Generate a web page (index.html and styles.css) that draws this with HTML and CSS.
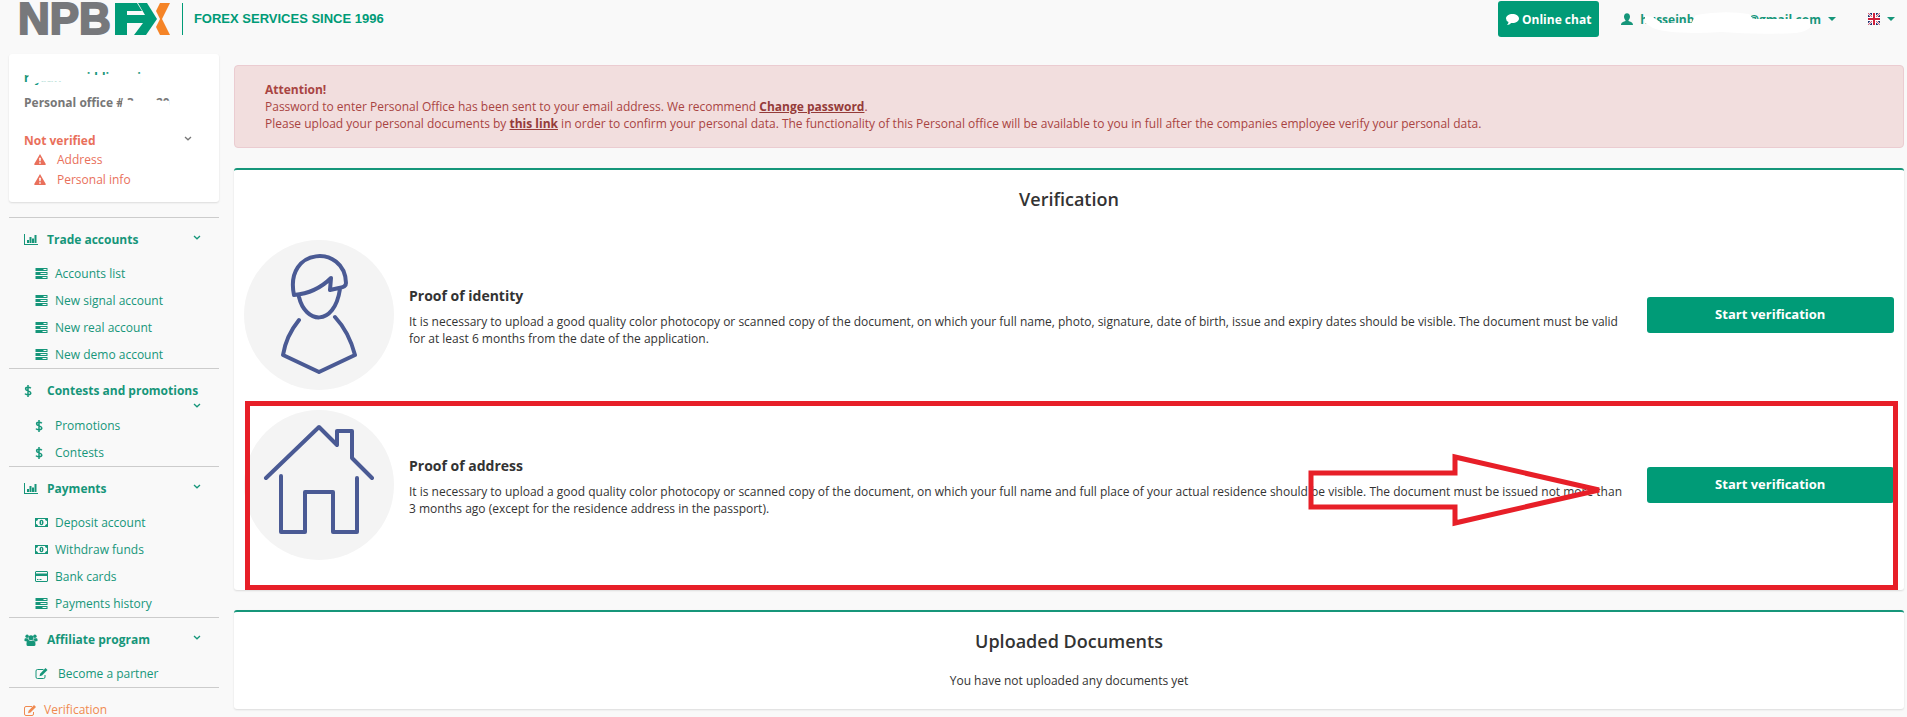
FILE: index.html
```html
<!DOCTYPE html>
<html lang="en">
<head>
    <meta charset="UTF-8">
    <meta name="viewport" content="width=device-width, initial-scale=1.0">
    <title>NPBFX - Verification</title>
    <link rel="stylesheet" href="styles.css">
</head>
<body>

<!-- icon set -->
<svg class="sprite" aria-hidden="true">
    <symbol id="i-chart" viewBox="0 0 14 12"><path d="M0 0h1v10h13v1H0zM3 6h2v3H3zM5.500 3h2v6h-2zM8 4.500h2V9H8zM10.500 1H12.500v8h-2z"/></symbol>
    <symbol id="i-tasks" viewBox="0 0 12 11"><path fill-rule="evenodd" d="M0 0h12v3H0zM8 1v1h3V1zM0 4h12v3H0zM5 5v1h6V5zM0 8h12v3H0zM7 9v1h4V9z"/></symbol>
    <symbol id="i-dollar" viewBox="0 0 8 12"><path fill="none" stroke="currentColor" stroke-width="1.500" d="M4 0v12M6.800 3.300C6 2.200 1.600 1.700 1.600 3.900 1.600 6.200 6.800 5.500 6.800 8 6.800 10.300 2 10.200 1 8.700"/></symbol>
    <symbol id="i-money" viewBox="0 0 13 9"><path fill-rule="evenodd" d="M0 0h13v9H0zM3 1C3 2 2 3 1 3v3c1 0 2 1 2 2h7c0-1 1-2 2-2V3c-1 0-2-1-2-2z"/><path fill-rule="evenodd" d="M6.500 1.700c2.700 0 2.700 5.600 0 5.600s-2.700-5.600 0-5.600zM6.200 3v3h.8V3z"/></symbol>
    <symbol id="i-card" viewBox="0 0 13 11"><path fill-rule="evenodd" d="M1 0h11l1 1v9l-1 1H1l-1-1V1zM1 1v1.500h11V1zM1 5v5h11V5zM2 8h1.500v1H2zM4.500 8h2v1h-2z"/></symbol>
    <symbol id="i-users" viewBox="0 0 13 12"><circle cx="2.600" cy="2.200" r="1.700"/><circle cx="10.400" cy="2.200" r="1.700"/><circle cx="6.500" cy="3.800" r="2.500"/><path d="M0 7V5.500C0 4 1 4 3.500 4.500L4.500 6.500 2.500 7.500zM13 7V5.500C13 4 12 4 9.500 4.500L8.500 6.500l2 1zM2 10.500C2 7 3 6.300 4.500 6.300q2 1.300 4 0C10 6.300 11 7 11 10.500q0 1.500-1.500 1.500h-6Q2 12 2 10.500z"/></symbol>
    <symbol id="i-edit" viewBox="0 0 12 11"><path fill="none" stroke="currentColor" d="M8 1.500H2Q.5 1.500.5 3v6q0 1.500 1.500 1.500h6q1.500 0 1.500-1.500V7"/><path d="M10 0l2 2-5.500 5.500-2.500.8.600-2.600z"/></symbol>
    <symbol id="i-warn" viewBox="0 0 13 12"><path fill-rule="evenodd" d="M6.500 0l6.300 11q.2 1-.8 1H1Q0 12 .2 11zM5.500 4l.3 4h1.400l.3-4zM5.700 9v1.500h1.600V9z"/></symbol>
    <symbol id="i-down" viewBox="0 0 8 5"><path fill="none" stroke="currentColor" stroke-width="1.300" d="M1 1l3 2.800L7 1"/></symbol>
    <symbol id="i-caret" viewBox="0 0 8 4"><path d="M0 0h8L4 4z"/></symbol>
    <symbol id="i-user" viewBox="0 0 12 12"><path d="M3 3.500C3-1 9-1 9 3.500 9 5.500 8.200 6.500 7.500 7.200v.8c1.500.7 4.500 1 4.500 4H0c0-3 3-3.300 4.500-4v-.8C3.800 6.500 3 5.500 3 3.500z"/></symbol>
    <symbol id="i-chat" viewBox="0 0 13 11"><path d="M6.500 0C10 0 13 1.800 13 4.500S10 9 6.500 9H5.200Q3.500 10.800 1 11 2.500 9.700 2.500 8 0 6.800 0 4.500C0 1.800 3 0 6.500 0z"/></symbol>
</svg>

<header class="header">
    <a class="logo" href="#" aria-label="NPBFX">
        <span class="logo-text">NPB</span>
        <svg class="logo-mark" width="55" height="32" viewBox="0 0 55 32">
            <path fill="#009b77" d="M0 0h22l5 8H12v4h18L23 0h9l10 16-11 16H19l9-12H12v12H0z"/>
            <path fill="#f58427" d="M45 0h10l-8 16 8 16H45l-4-8 4-8-4-8z"/>
        </svg>
    </a>
    <span class="slogan">FOREX SERVICES SINCE 1996</span>
    <div class="header-right">
        <button class="btn chat"><svg width="13" height="11"><use href="#i-chat"/></svg>Online chat</button>
        <button class="menu user">
            <svg width="12" height="12"><use href="#i-user"/></svg>
            <span class="masked">husseinb<span class="mask-gap"></span>@gmail.com
                <svg class="mask" viewBox="0 0 182 24" preserveAspectRatio="none"><path fill="#fff" d="M5 12V5l8 1 8 6h31l4-8q28-5 54-1l4 5h57l1 8q-5 5-15 6-40 2-75-1-50 3-69-4z"/></svg>
            </span>
            <svg width="8" height="4"><use href="#i-caret"/></svg>
        </button>
        <button class="menu lang" aria-label="Language">
            <svg width="12" height="12" viewBox="0 0 12 12">
                <path fill="#223370" d="M0 0h12v12H0z"/>
                <path stroke="#fff" stroke-width="2" d="M0 0l12 12M12 0L0 12"/>
                <path stroke="#d0203c" stroke-width=".7" d="M0 0l12 12M12 0L0 12"/>
                <path stroke="#fff" stroke-width="4" d="M6 0v12M0 6h12"/>
                <path stroke="#d0203c" stroke-width="2" d="M6 0v12M0 6h12"/>
            </svg>
            <svg width="8" height="4"><use href="#i-caret"/></svg>
        </button>
    </div>
</header>

<div class="layout">
    <aside class="sidebar">
        <div class="profile">
            <a class="name masked" href="#">r&nbsp; jaan &nbsp; &nbsp; &nbsp; &nbsp;iddi &nbsp; &nbsp; &nbsp; &nbsp; i
                <svg class="mask" viewBox="0 0 130 20" preserveAspectRatio="none"><path fill="#fff" d="M5 0h50v7h75v13H43l-1-5H20L5 20zM5 6h50v6H14l-2 5H5z"/></svg>
            </a>
            <div class="office masked">Personal office # 3 <span class="digits-gap"></span>20
                <svg class="mask" viewBox="0 0 150 20" preserveAspectRatio="none"><path fill="#fff" d="M101 8h49v12h-49z"/></svg>
            </div>
            <div class="status">
                <span>Not verified</span>
                <svg width="8" height="5"><use href="#i-down"/></svg>
            </div>
            <ul class="checks">
                <li><svg width="12" height="11"><use href="#i-warn"/></svg><a href="#">Address</a></li>
                <li><svg width="12" height="11"><use href="#i-warn"/></svg><a href="#">Personal info</a></li>
            </ul>
        </div>

        <nav>
            <section class="group">
                <a class="group-title" href="#"><svg class="icon" width="14" height="12"><use href="#i-chart"/></svg><span>Trade accounts</span><svg class="chevron" width="8" height="13"><use href="#i-down"/></svg></a>
                <a class="item" href="#"><svg class="icon" width="12" height="11"><use href="#i-tasks"/></svg>Accounts list</a>
                <a class="item" href="#"><svg class="icon" width="12" height="11"><use href="#i-tasks"/></svg>New signal account</a>
                <a class="item" href="#"><svg class="icon" width="12" height="11"><use href="#i-tasks"/></svg>New real account</a>
                <a class="item" href="#"><svg class="icon" width="12" height="11"><use href="#i-tasks"/></svg>New demo account</a>
            </section>
            <section class="group">
                <a class="group-title" href="#"><svg class="icon dollar" width="8" height="12"><use href="#i-dollar"/></svg><span>Contests and promotions</span><svg class="chevron" width="8" height="13"><use href="#i-down"/></svg></a>
                <a class="item" href="#"><svg class="icon dollar" width="8" height="12"><use href="#i-dollar"/></svg>Promotions</a>
                <a class="item" href="#"><svg class="icon dollar" width="8" height="12"><use href="#i-dollar"/></svg>Contests</a>
            </section>
            <section class="group">
                <a class="group-title" href="#"><svg class="icon" width="14" height="12"><use href="#i-chart"/></svg><span>Payments</span><svg class="chevron" width="8" height="13"><use href="#i-down"/></svg></a>
                <a class="item" href="#"><svg class="icon" width="13" height="9"><use href="#i-money"/></svg>Deposit account</a>
                <a class="item" href="#"><svg class="icon" width="13" height="9"><use href="#i-money"/></svg>Withdraw funds</a>
                <a class="item" href="#"><svg class="icon" width="13" height="11"><use href="#i-card"/></svg>Bank cards</a>
                <a class="item" href="#"><svg class="icon" width="12" height="11"><use href="#i-tasks"/></svg>Payments history</a>
            </section>
            <section class="group">
                <a class="group-title" href="#"><svg class="icon" width="14" height="12"><use href="#i-users"/></svg><span>Affiliate program</span><svg class="chevron" width="8" height="13"><use href="#i-down"/></svg></a>
                <a class="item wide" href="#"><svg class="icon" width="12" height="11"><use href="#i-edit"/></svg>Become a partner</a>
            </section>
            <section class="group">
                <a class="single" href="#"><svg width="12" height="11"><use href="#i-edit"/></svg>Verification</a>
            </section>
        </nav>
    </aside>

    <main class="main">
        <div class="alert">
            <strong>Attention!</strong><br>
            Password to enter Personal Office has been sent to your email address. We recommend <a href="#">Change password</a>.<br>
            Please upload your personal documents by <a href="#">this link</a> in order to confirm your personal data. The functionality of this Personal office will be available to you in full after the companies employee verify your personal data.
        </div>

        <section class="panel verification">
            <h2>Verification</h2>
            <div class="proof">
                <svg class="picture" viewBox="0 0 150 150">
                    <circle cx="75" cy="75" r="75" fill="#f4f4f4"/>
                    <path d="M50 55C40 7 101 4 102 43Q102 47 95 48L86 50 87 38Q72 53 50 55M55 57C61 83 90 88 96 49M55 80Q42 96 39 115L75 132 111 115Q105 92 91 77"/>
                </svg>
                <div class="info">
                    <h3>Proof of identity</h3>
                    <p>It is necessary to upload a good quality color photocopy or scanned copy of the document, on which your full name, photo, signature, date of birth, issue and expiry dates should be visible. The document must be valid for at least 6 months from the date of the application.</p>
                </div>
                <button class="btn start">Start verification</button>
            </div>
            <div class="proof">
                <svg class="picture" viewBox="0 0 150 150">
                    <circle cx="75" cy="75" r="75" fill="#f4f4f4"/>
                    <path d="M22 68L75 17 93 35V21h15v27l20 20M37 66v56h24V82h28v40h24V68"/>
                </svg>
                <div class="info">
                    <h3>Proof of address</h3>
                    <p>It is necessary to upload a good quality color photocopy or scanned copy of the document, on which your full name and full place of your actual residence should be visible. The document must be issued not more than 3 months ago (except for the residence address in the passport).</p>
                </div>
                <button class="btn start">Start verification</button>
                <div class="highlight"></div>
                <svg class="arrow" width="298" height="74" viewBox="0 0 298 74"><path d="M4 20h144V4l144 33-144 33V54H4z"/></svg>
            </div>
        </section>

        <section class="panel">
            <h2>Uploaded Documents</h2>
            <p class="empty">You have not uploaded any documents yet</p>
        </section>
    </main>
</div>

</body>
</html>
```

FILE: styles.css
```css
* {
    box-sizing: border-box;
}
body {
    margin: 0;
    background-color: #f9f9f9;
    color: #333;
    font-family: "Open Sans", "Noto Sans", sans-serif;
    font-size: 12px;
    line-height: 17px;
}
a {
    color: #16967a;
    text-decoration: none;
}
button {
    font: inherit;
    border: none;
    cursor: pointer;
}
svg {
    fill: currentColor;
    flex: none;
}
.sprite {
    display: none;
}

/* header */
.header {
    display: flex;
    align-items: flex-start;
    height: 54px;
    padding: 1px 12px 0 18px;
}
.logo {
    display: flex;
    align-items: center;
    height: 36px;
    padding-right: 12px;
}
.logo-text {
    font-family: "Liberation Sans", Arial, sans-serif;
    font-size: 44px;
    font-weight: bold;
    line-height: 36px;
    color: #77787b;
    -webkit-text-stroke: 2px #77787b;
}
.logo-mark {
    margin-left: 4px;
}
.slogan {
    margin-top: 2px;
    padding-left: 11px;
    border-left: 1px solid #009b77;
    color: #009b77;
    font-family: "Liberation Sans", Arial, sans-serif;
    font-size: 13px;
    font-weight: bold;
    line-height: 32px;
}
.header-right {
    display: flex;
    align-items: center;
    margin-left: auto;
}
.btn {
    height: 36px;
    border-radius: 3px;
    background-color: #009b77;
    color: #fff;
    font-weight: bold;
}
.chat {
    display: flex;
    align-items: center;
    gap: 3px;
    padding: 0 8px;
    margin-right: 22px;
}
.menu {
    display: flex;
    align-items: center;
    gap: 7px;
    padding: 0;
    background: none;
    color: #16967a;
    font-weight: bold;
}
.user {
    margin-right: 32px;
}
.masked {
    position: relative;
    white-space: nowrap;
}
.mask {
    position: absolute;
    left: 0;
    top: 0;
    width: 100%;
    height: 100%;
}
.user .mask {
    height: 24px;
}
.mask-gap {
    display: inline-block;
    width: 54px;
}

/* columns */
.layout {
    display: grid;
    grid-template-columns: 210px 1fr;
    gap: 15px;
    padding: 0 3px 0 9px;
}

/* sidebar */
.profile {
    height: 148px;
    padding: 15px;
    margin-bottom: 15px;
    border-radius: 3px;
    background-color: #fff;
    box-shadow: 0 1px 2px rgba(0, 0, 0, 0.12);
}
.name {
    display: inline-block;
    font-weight: bold;
}
.office {
    display: inline-block;
    margin-top: 8px;
    color: #777;
    font-weight: bold;
}
.digits-gap {
    display: inline-block;
    width: 19px;
}
.status {
    display: flex;
    justify-content: space-between;
    padding-right: 12px;
    margin-top: 21px;
    color: #e9705b;
    font-weight: bold;
}
.status svg {
    margin-top: 4px;
    color: #777;
}
.checks {
    margin: 0;
    padding: 0 0 0 10px;
    list-style: none;
}
.checks li {
    display: flex;
    align-items: center;
    gap: 11px;
    height: 20px;
    color: #e9705b;
}
.checks a {
    color: #e9705b;
}
.group {
    border-top: 1px solid #ccc;
}
.group-title {
    display: flex;
    flex-wrap: wrap;
    min-height: 42px;
    padding: 13px 18px 0 15px;
    font-weight: bold;
}
.group-title .icon {
    margin: 3px 9px 0 0;
}
.group-title .dollar {
    margin-right: 15px;
}
.group-title .chevron {
    margin-left: auto;
}
.item {
    display: flex;
    align-items: center;
    height: 27px;
    padding-left: 26px;
}
.item .icon {
    width: 13px;
    margin-right: 7px;
}
.item .dollar {
    width: 8px;
    margin-right: 12px;
}
.item.wide .icon {
    margin-right: 10px;
}
.single {
    display: flex;
    align-items: center;
    gap: 8px;
    padding: 16px 15px 0;
    color: #f08a50;
    line-height: 12px;
}

/* main column */
.main {
    padding-top: 11px;
}
.alert {
    padding: 15px 30px;
    margin-bottom: 20px;
    border: 1px solid #ebccd1;
    border-radius: 4px;
    background-color: #f2dede;
    color: #a94442;
}
.alert a {
    color: #953b39;
    font-weight: bold;
    text-decoration: underline;
}
.panel {
    padding: 19px 10px 20px;
    margin-bottom: 20px;
    border-top: 2px solid #16967a;
    border-radius: 3px;
    background-color: #fff;
    box-shadow: 0 1px 2px rgba(0, 0, 0, 0.12);
}
.panel h2 {
    margin: 0;
    font-size: 18px;
    font-weight: 600;
    line-height: 20px;
    text-align: center;
}
.verification {
    padding-bottom: 10px;
}
.proof {
    position: relative;
    display: flex;
    align-items: center;
    padding-bottom: 20px;
}
.verification h2 {
    margin-bottom: 31px;
}
.picture {
    width: 150px;
    height: 150px;
}
.picture path {
    fill: none;
    stroke: #4a5a94;
    stroke-width: 4;
    stroke-linecap: round;
    stroke-linejoin: round;
}
.info {
    flex: 1;
    padding: 4px 20px 0 15px;
}
.info h3 {
    margin: 0 0 8px;
    font-size: 14px;
    font-weight: bold;
    line-height: 18px;
}
.info p {
    margin: 0;
}
.start {
    width: 15%;
    padding-bottom: 2px;
    font-size: 13px;
}
.empty {
    margin: 21px 0 0;
    text-align: center;
}

/* marks drawn over the address row */
.highlight {
    position: absolute;
    top: -9px;
    right: -4px;
    bottom: -10px;
    left: 1px;
    border: 5px solid #e71f28;
    pointer-events: none;
}
.arrow {
    position: absolute;
    top: 43px;
    right: 289px;
    fill: none;
    stroke: #e71f28;
    stroke-width: 5;
    pointer-events: none;
}
```
